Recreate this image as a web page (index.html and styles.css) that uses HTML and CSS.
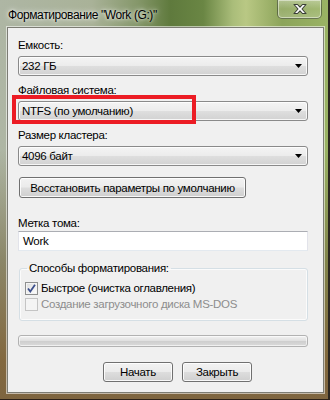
FILE: index.html
```html
<!DOCTYPE html>
<html lang="ru">
<head>
<meta charset="utf-8">
<title>Форматирование</title>
<link rel="stylesheet" href="styles.css">
</head>
<body>
<div class="window">
  <div class="titlebar">
    <span class="title">Форматирование "Work (G:)"</span>
    <div class="close">
      <svg width="16" height="12" viewBox="0 0 16 12"><path d="M2 1.5 L5.5 1.5 L8 4.2 L10.5 1.5 L14 1.5 L10 6 L14 10.5 L10.5 10.5 L8 7.8 L5.5 10.5 L2 10.5 L6 6 Z" fill="#ffffff" stroke="#3a3f36" stroke-width="1.1" stroke-linejoin="round"/></svg>
    </div>
  </div>
  <div class="client">
    <div class="label first">Емкость:</div>
    <div class="combo"><span>232 ГБ</span><svg class="arrow" width="7" height="4" viewBox="0 0 7 4"><path d="M0 0 H7 L3.5 4 Z" fill="#000"/></svg></div>
    <div class="label">Файловая система:</div>
    <div class="combo"><span>NTFS (по умолчанию)</span><svg class="arrow" width="7" height="4" viewBox="0 0 7 4"><path d="M0 0 H7 L3.5 4 Z" fill="#000"/></svg></div>
    <div class="label">Размер кластера:</div>
    <div class="combo"><span>4096 байт</span><svg class="arrow" width="7" height="4" viewBox="0 0 7 4"><path d="M0 0 H7 L3.5 4 Z" fill="#000"/></svg></div>
    <div class="btn restore">Восстановить параметры по умолчанию</div>
    <div class="label vol">Метка тома:</div>
    <div class="textbox">Work</div>
    <fieldset class="group">
      <legend>Способы форматирования:</legend>
      <div class="check-row">
        <span class="check checked"><svg width="9" height="9" viewBox="0 0 9 9"><path d="M1 4.5 L3.3 7.5 L8 0.8" fill="none" stroke="#3c4f8c" stroke-width="1.8"/></svg></span>
        <span>Быстрое (очистка оглавления)</span>
      </div>
      <div class="check-row disabled">
        <span class="check"></span>
        <span>Создание загрузочного диска MS-DOS</span>
      </div>
    </fieldset>
    <div class="progress"></div>
    <div class="actions">
      <div class="btn action">Начать</div>
      <div class="btn action">Закрыть</div>
    </div>
    <div class="highlight"></div>
  </div>
</div>
</body>
</html>
```
FILE: styles.css
```css
* { box-sizing: border-box; }
html, body { margin: 0; padding: 0; }
body {
  width: 330px;
  height: 400px;
  overflow: hidden;
  font-family: "Liberation Sans", Arial, sans-serif;
  font-size: 11.5px;
  letter-spacing: -0.3px;
  color: #000;
  background: #2a2218;
}
.window {
  width: 330px;
  height: 400px;
  display: flex;
  flex-direction: column;
  border-right: 2px solid #2b2620;
  border-bottom: 1px solid #2b2018;
  background:
    linear-gradient(180deg, rgba(0,0,0,0) 0px, rgba(0,0,0,0) 150px, rgba(110,95,55,0.55) 260px, rgba(128,100,58,0.95) 360px, #7e6540 400px),
    linear-gradient(90deg, #aeb6a4 0%, #a9b298 28%, #85976a 42%, #5f7a3d 52%, #6a8644 62%, #aabd7a 71%, #b9c884 75%, #8ca45a 86%, #9ab364 100%);
}
.titlebar {
  height: 28px;
  display: flex;
  align-items: flex-start;
  padding-left: 8px;
}
.title {
  margin-top: 8px;
  line-height: 14px;
  font-size: 12px;
  letter-spacing: -0.4px;
  text-shadow: 0 0 6px rgba(255,255,255,0.9), 0 0 3px rgba(255,255,255,0.8);
}
.close {
  margin-left: auto;
  margin-right: 6px;
  width: 45px;
  height: 19px;
  border: 1px solid rgba(40,50,30,0.55);
  border-top: none;
  border-radius: 0 0 5px 5px;
  background: linear-gradient(180deg, rgba(255,255,255,0.35), rgba(255,255,255,0.1) 50%, rgba(255,255,255,0.2));
  box-shadow: inset 0 0 0 1px rgba(255,255,255,0.45);
  display: flex;
  align-items: center;
  justify-content: center;
}
.client {
  position: relative;
  flex: 1;
  margin: 0 5px 7px 8px;
  background: #f0f0f0;
  box-shadow: 0 0 0 1px #7c7c74, 0 0 0 2px rgba(255,255,255,0.55);
  padding: 10px 15px 0 10px;
}
.label {
  line-height: 14px;
  margin-top: 7px;
}
.label.first { margin-top: 0; }
.label.vol { margin-top: 18px; }
.combo {
  margin-top: 4px;
  height: 20px;
  border: 1px solid #8a8a8a;
  border-radius: 3px;
  background: linear-gradient(180deg, #f4f4f4 0%, #ececec 48%, #dedede 52%, #d2d2d2 100%);
  box-shadow: inset 0 0 0 1px rgba(255,255,255,0.8);
  display: flex;
  align-items: center;
  padding-left: 3px;
  padding-right: 5px;
}
.combo span { flex: 1; line-height: 14px; }
.arrow { display: block; }
.btn {
  height: 21px;
  border: 1px solid #707070;
  border-radius: 3px;
  background: linear-gradient(180deg, #f2f2f2 0%, #ebebeb 48%, #dddddd 52%, #cfcfcf 100%);
  box-shadow: inset 0 0 0 1px rgba(255,255,255,0.85);
  display: flex;
  align-items: center;
  justify-content: center;
  line-height: 14px;
}
.restore {
  margin-top: 11px;
  margin-left: 1px;
  width: 227px;
}
.textbox {
  margin-top: 1px;
  height: 20px;
  background: #fff;
  border: 1px solid #e2e3ea;
  border-top-color: #abadb3;
  border-bottom-color: #e3e9ef;
  display: flex;
  align-items: center;
  padding-left: 4px;
}
.group {
  margin: 10px 0 0 1px;
  padding: 0 5px 8px 5px;
  border: 1px solid #d5dfe5;
  border-radius: 3px;
  box-shadow: inset 0 0 0 1px rgba(255,255,255,0.7);
}
.group legend {
  padding: 0 2px;
  margin-left: 2px;
  line-height: 14px;
}
.check-row {
  display: flex;
  align-items: center;
  gap: 3px;
  height: 16px;
}
.check-row:first-of-type { margin-top: 5px; }
.check {
  width: 13px;
  height: 13px;
  border: 1px solid #8e8f8f;
  background: linear-gradient(135deg, #dcdcdc, #ffffff);
  box-shadow: inset 0 0 0 1px #f4f4f4;
  display: flex;
  align-items: center;
  justify-content: center;
}
.check-row.disabled { color: #8d8d8d; }
.check-row.disabled .check {
  border-color: #c4c4c4;
  background: #f4f4f4;
  box-shadow: none;
}
.progress {
  margin-top: 14px;
  height: 12px;
  border: 1px solid #b2b2b2;
  border-radius: 3px;
  background: linear-gradient(180deg, #f3f3f3 0%, #e1e1e1 45%, #cfcfcf 55%, #dadada 100%);
  box-shadow: inset 0 0 0 1px rgba(255,255,255,0.6);
}
.actions {
  margin-top: 15px;
  display: flex;
  gap: 9px;
  padding-left: 85px;
}
.action {
  width: 70px;
  height: 20px;
}
.highlight {
  position: absolute;
  left: 4px;
  top: 67px;
  width: 184px;
  height: 29px;
  border: 4px solid #ec1c24;
}
```
